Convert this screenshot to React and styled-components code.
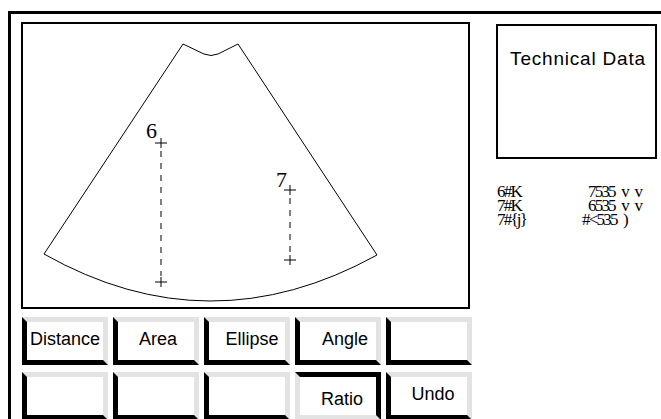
import styled, { createGlobalStyle } from "styled-components"

const GlobalStyle = createGlobalStyle`
    html, body {
        margin: 0;
        padding: 0;
        background: #ffffff;
        overflow: hidden;
    }
    body {
        font-family: "Liberation Sans", Arial, sans-serif;
        color: #000;
    }
`

const buttons = [
    { label: "Distance", shift: 0 },
    { label: "Area", shift: 2 },
    { label: "Ellipse", shift: 5 },
    { label: "Angle", shift: 7 },
    { label: "", shift: 0 },
    { label: "", shift: 0 },
    { label: "", shift: 0 },
    { label: "", shift: 0 },
    { label: "Ratio", shift: 4, pressed: true },
    { label: "Undo", shift: 4 },
]

const readings = [
    { name: "6#K", value: "7535 v v" },
    { name: "7#K", value: "6535 v v" },
    { name: "7#{j}", value: "#<535 )", back: 6 },
]

function Marker({ x, y }) {
    return (
        <g stroke="#000" strokeWidth="1">
            <line x1={x - 6} y1={y} x2={x + 6} y2={y} />
            <line x1={x} y1={y - 5} x2={x} y2={y + 5} />
        </g>
    )
}

function Scan() {
    return (
        <svg width="445" height="283" viewBox="23 24 445 283">
            <path
                d="M183 44 L204 54 Q211 57 218 54 L238 44 L377 255 Q209.5 347.5 44 254 Z"
                fill="none"
                stroke="#000"
                strokeWidth="1"
            />
            <line x1="161" y1="151" x2="161" y2="276" stroke="#000" strokeDasharray="6 6" />
            <line x1="290" y1="198" x2="290" y2="254" stroke="#000" strokeDasharray="6 6" />
            <Marker x={161} y={143} />
            <Marker x={161} y={282} />
            <Marker x={290} y={190} />
            <Marker x={290} y={260} />
            <MarkLabel x="146" y="138">6</MarkLabel>
            <MarkLabel x="276" y="187">7</MarkLabel>
        </svg>
    )
}

export default function App() {
    return (
        <>
            <GlobalStyle />
            <Frame>
                <LeftColumn>
                    <Canvas>
                        <Scan />
                    </Canvas>
                    <ButtonGrid>
                        {buttons.map((b, i) => (
                            <BevelButton key={i} $pressed={b.pressed} $shift={b.shift}>
                                {b.label}
                            </BevelButton>
                        ))}
                    </ButtonGrid>
                </LeftColumn>
                <RightColumn>
                    <TechBox>Technical Data</TechBox>
                    <Readings>
                        {readings.map((r, i) => (
                            <ReadingRow key={i}>
                                <Garbled>{r.name}</Garbled>
                                <Garbled $back={r.back}>{r.value}</Garbled>
                            </ReadingRow>
                        ))}
                    </Readings>
                </RightColumn>
            </Frame>
        </>
    )
}

const Frame = styled.div`
    box-sizing: border-box;
    margin: 11px 0 0 8px;
    height: 408px;
    overflow: hidden;
    border-top: 3px solid #000;
    border-left: 3px solid #000;
    padding: 8px 0 0 10px;
    display: grid;
    grid-template-columns: 451px 161px;
    column-gap: 24px;
    align-items: start;
`

const LeftColumn = styled.div`
    display: flex;
    flex-direction: column;
`

const Canvas = styled.div`
    width: 445px;
    height: 283px;
    border: 2px solid #000;
    background: #fff;
    svg {
        display: block;
    }
`

const MarkLabel = styled.text`
    font-family: "Liberation Serif", "Times New Roman", serif;
    font-size: 22px;
    fill: #000;
`

const ButtonGrid = styled.div`
    margin: 8px 0 0 1px;
    display: grid;
    grid-template-columns: repeat(5, 86px);
    grid-auto-rows: 48px;
    column-gap: 5px;
    row-gap: 7px;
`

const BevelButton = styled.button`
    box-sizing: border-box;
    margin: 0;
    width: 86px;
    height: 48px;
    border: 5px solid;
    border-color: ${p => p.$pressed ? "#000 #000 #e3e3e3 #e3e3e3" : "#e3e3e3 #e3e3e3 #000 #000"};
    background: #fff;
    display: flex;
    align-items: center;
    justify-content: center;
    padding: ${p => p.$pressed ? "6px" : "0"} 0 ${p => p.$pressed ? "0" : "3px"} ${p => p.$shift * 2}px;
    font-family: "Liberation Sans", Arial, sans-serif;
    font-size: 18px;
    color: #000;
    white-space: nowrap;
    overflow: hidden;
`

const RightColumn = styled.div`
    display: flex;
    flex-direction: column;
    padding-top: 2px;
`

const TechBox = styled.div`
    box-sizing: border-box;
    width: 161px;
    height: 135px;
    border: 2px solid #000;
    padding-top: 22px;
    text-align: center;
    font-family: "Liberation Sans", Arial, sans-serif;
    font-size: 19px;
    letter-spacing: 0.8px;
    padding-left: 3px;
`

const Readings = styled.div`
    margin-top: 26px;
    margin-left: 1px;
    display: flex;
    flex-direction: column;
`

const ReadingRow = styled.div`
    display: grid;
    grid-template-columns: 91px auto;
    line-height: 14px;
    height: 14px;
`

const Garbled = styled.span`
    font-family: "Liberation Serif", "Times New Roman", serif;
    font-size: 17px;
    letter-spacing: -1.8px;
    word-spacing: 4px;
    white-space: pre;
    margin-left: ${p => p.$back ? -p.$back : 0}px;
`
